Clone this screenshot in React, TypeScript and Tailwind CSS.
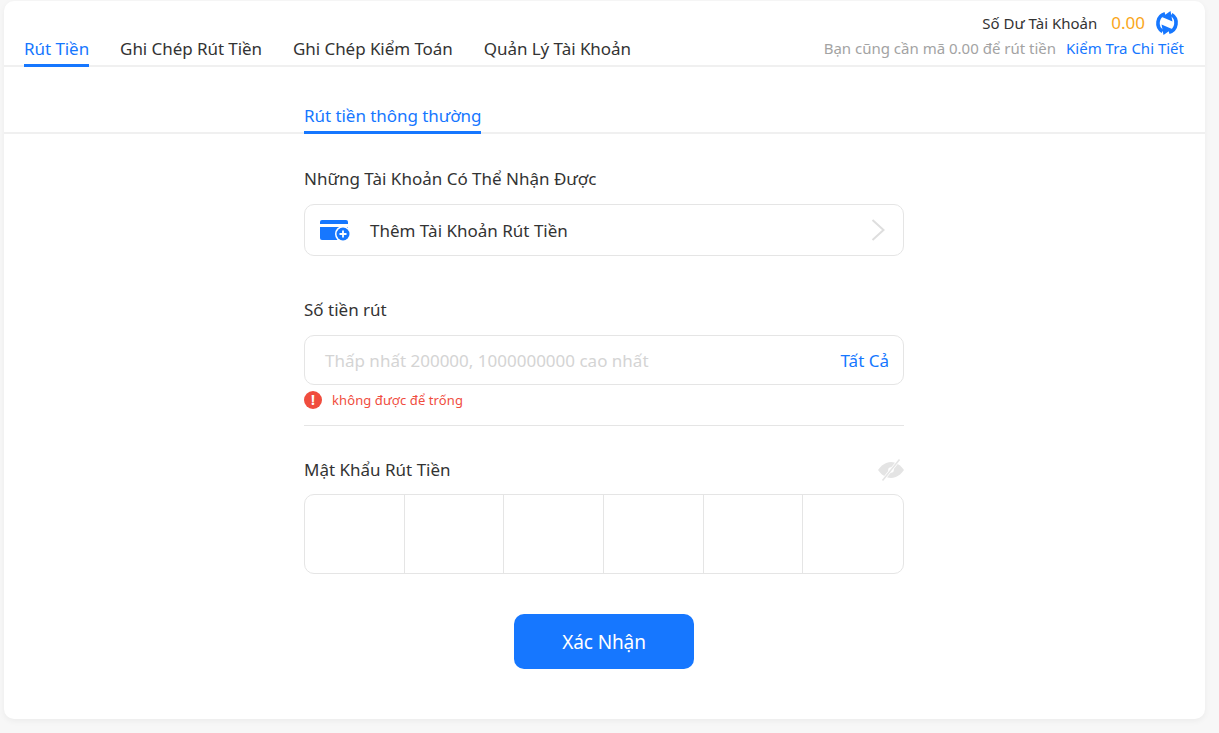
const tabs = ["Rút Tiền", "Ghi Chép Rút Tiền", "Ghi Chép Kiểm Toán", "Quản Lý Tài Khoản"];

function RefreshIcon() {
  const half = (
    <>
      <path d="M7.500 20.500A9.800 9.800 0 0 1 10 2.800" fill="none" stroke="#1677ff" strokeWidth="3.600" />
      <path d="M15.500 0 17.500 10.500 7 6z" fill="#1677ff" />
    </>
  );
  return (
    <svg className="ml-[10px] mr-[5px] h-6 w-6" viewBox="0 0 24 24">
      {half}
      <g transform="rotate(180 12 12)">{half}</g>
    </svg>
  );
}

function CardAddIcon() {
  return (
    <svg className="h-[21px] w-[30px] shrink-0" viewBox="0 0 30 21">
      <path d="M2 0h24a2 2 0 0 1 2 2v2H0V2a2 2 0 0 1 2-2z" fill="#1677ff" />
      <path d="M0 7h28v13H2a2 2 0 0 1-2-2z" fill="#1677ff" />
      <circle cx="23" cy="14" r="8" fill="#fff" />
      <circle cx="23" cy="14" r="6.500" fill="#1677ff" />
      <path d="M23 10.500v7M19.500 14h7" stroke="#fff" strokeWidth="1.800" />
    </svg>
  );
}

function EyeOffIcon() {
  return (
    <svg className="h-[22px] w-[26px]" viewBox="0 0 26 22" fill="#e4e4e4">
      <path d="M13 3c5.600 0 10 3.800 13 8-3 4.200-7.400 8-13 8S3 15.200 0 11c3-4.200 7.400-8 13-8z" />
      <circle cx="13" cy="11" r="2.800" fill="#fff" />
      <path d="M4.500 21.500 21.500 0.500" stroke="#fff" strokeWidth="3" />
      <path d="M4.500 21.500 21.500 0.500" stroke="#e4e4e4" strokeWidth="1.600" />
    </svg>
  );
}

function Chevron() {
  return (
    <svg className="h-[22px] w-[14px] shrink-0" viewBox="0 0 14 22" fill="none">
      <path d="M1.500 1 12.500 11 1.500 21" stroke="#dedede" strokeWidth="2" />
    </svg>
  );
}

export default function App() {
  return (
    <div className="h-[733px] overflow-hidden bg-[#f7f7f7] pl-1 pr-[14px] pt-px font-['Noto_Sans','Liberation_Sans',sans-serif] text-[17px] text-[#333]">
      <div className="h-[718px] rounded-[10px] bg-white shadow-[0_2px_6px_rgba(0,0,0,0.05)]">
        <div className="flex h-[66px] items-end justify-between border-b-2 border-[#f0f0f0] pl-5 pr-[21px]">
          <div className="flex gap-[31px]">
            {tabs.map((tab, i) => (
              <div
                key={tab}
                className={`-mb-0.5 h-[31px] border-b-[3px] leading-[26px] tracking-[-0.06px] ${
                  i === 0 ? "border-[#1677ff] text-[#1677ff]" : "border-transparent"
                }`}
              >
                {tab}
              </div>
            ))}
          </div>
          <div className="flex flex-col items-end pb-[7px]">
            <div className="flex h-6 items-center text-[15px]">
              <span>Số Dư Tài Khoản</span>
              <span className="ml-[14px] text-[17px] text-[#faa61a]">0.00</span>
              <RefreshIcon />
            </div>
            <div className="mt-[3px] flex text-[15px] leading-[20px]">
              <span className="text-[#a3a3a3]">Bạn cũng cần mã 0.00 để rút tiền</span>
              <span className="ml-[10px] text-[#1677ff]">Kiểm Tra Chi Tiết</span>
            </div>
          </div>
        </div>

        <div className="flex h-[67px] items-end border-b-2 border-[#f0f0f0] pl-[300px]">
          <div className="-mb-0.5 h-[31px] border-b-[3px] border-[#1677ff] leading-[26px] tracking-[-0.05px] text-[#1677ff]">
            Rút tiền thông thường
          </div>
        </div>

        <div className="ml-[300px] w-[600px]">
          <div className="mt-[33px] leading-[24px]">Những Tài Khoản Có Thể Nhận Được</div>
          <div className="mt-[13px] flex h-[52px] items-center rounded-[10px] border border-[#e5e5e5] pl-[15px] pr-[18px]">
            <CardAddIcon />
            <span className="ml-5 flex-1 pt-px">Thêm Tài Khoản Rút Tiền</span>
            <Chevron />
          </div>

          <div className="mt-[42px] leading-[24px]">Số tiền rút</div>
          <div className="mt-[13px] flex h-[50px] items-center justify-between rounded-[10px] border border-[#e5e5e5] pl-5 pr-[14px] pt-px">
            <span className="text-[#d4d4d4]">Thấp nhất 200000, 1000000000 cao nhất</span>
            <span className="text-[#1677ff]">Tất Cả</span>
          </div>
          <div className="mt-[6px] flex h-[18px] items-center text-[13px] tracking-[0.1px] text-[#f04d3e]">
            <span className="flex h-[18px] w-[18px] items-center justify-center rounded-full bg-[#f04d3e] text-[14px] font-bold leading-none text-white">!</span>
            <span className="ml-[10px] pt-0.5">không được để trống</span>
          </div>
          <div className="mt-[16px] border-t border-[#e5e5e5]" />

          <div className="mt-[32px] flex h-6 items-center justify-between">
            <span>Mật Khẩu Rút Tiền</span>
            <EyeOffIcon />
          </div>
          <div className="mt-[12px] grid h-20 grid-cols-6 divide-x divide-[#e5e5e5] rounded-[10px] border border-[#e5e5e5]">
            {[0, 1, 2, 3, 4, 5].map((n) => (
              <div key={n} />
            ))}
          </div>

          <button className="mx-auto mt-10 flex h-[55px] w-[180px] items-center justify-center rounded-[10px] bg-[#1677ff] pt-0.5 text-[19px] tracking-[-0.1px] text-white">
            Xác Nhận
          </button>
        </div>
      </div>
    </div>
  );
}
